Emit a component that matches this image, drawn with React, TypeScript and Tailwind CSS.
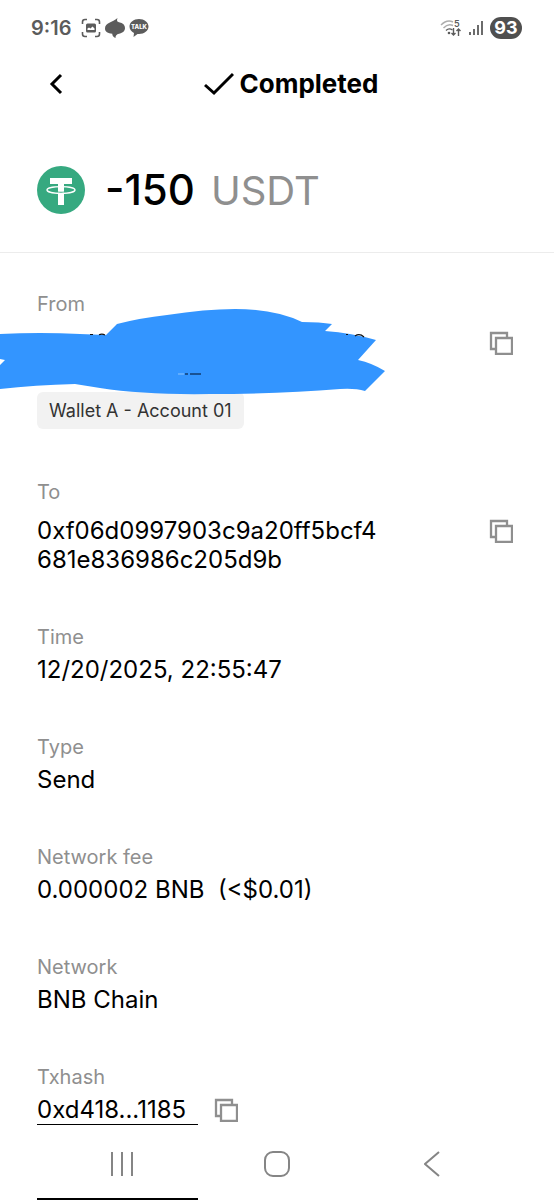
import type { ReactNode } from "react";

const fields = [
  { label: "Time", value: "12/20/2025, 22:55:47" },
  { label: "Type", value: "Send" },
  { label: "Network fee", value: "0.000002 BNB  (<$0.01)" },
  { label: "Network", value: "BNB Chain" },
];

function CopyButton({ label }: { label: string }) {
  return (
    <button type="button" aria-label={label} className="flex h-[29px] w-8 shrink-0 items-center justify-center">
      <svg width="24" height="24" viewBox="0 0 24 24" fill="none" stroke="#8f8f8f" strokeWidth="2.3">
        <path d="M6 18H2V2h16v4" />
        <path d="M7 7h16v16H7z" />
      </svg>
    </button>
  );
}

function Field({ label, children, className = "gap-1" }: { label: string; children: ReactNode; className?: string }) {
  return (
    <div className={`flex flex-col ${className}`}>
      <dt className="text-xl leading-7 text-[#8f8f8f]">{label}</dt>
      <dd className="text-2xl leading-[29px] whitespace-pre">{children}</dd>
    </div>
  );
}

function StatusBar() {
  return (
    <div className="flex h-14 items-center justify-between pr-8 pl-[31px] text-[#5c5c5c]">
      <div className="flex items-center gap-1">
        <span className="mr-1.5 text-xl font-semibold">9:16</span>
        <svg width="20" height="20" viewBox="0 0 20 20" fill="none" stroke="currentColor" strokeWidth="1.6">
          <path d="M1.500 6V4q0-2.500 2.500-2.500h2M14 1.500h2q2.500 0 2.500 2.500v2M18.500 14v2q0 2.500-2.500 2.500h-2M6 18.500H4q-2.500 0-2.500-2.500v-2" />
          <rect x="5" y="5.500" width="10" height="9" rx="1.500" fill="currentColor" stroke="none" />
          <path d="M6.500 12v-1.500l1.500-1 1.500 1 2-2 2 2V12z" fill="white" stroke="none" />
        </svg>
        <svg width="20" height="20" viewBox="0 0 20 20" fill="currentColor">
          <path d="M12.500 0C11.500 2.500 12 3.800 14 4.300c4 .8 6 2.900 6 5.700 0 3.500-3 5-6 5.800-2.500.6-3.500 1.700-3.500 4.200C8.500 19 7 17.500 7.300 15.700 3 15.500 0 13.800 0 10.500 0 4.500 7.500 4.500 12.500 0z" />
        </svg>
        <svg width="20" height="20" viewBox="0 0 20 20">
          <path d="M10 1c5.300 0 9.500 3.300 9.500 7.500S15.300 16 10 16l-1.500-.1L4.500 19l.5-4C2.300 13.700.5 11.300.5 8.500.5 4.300 4.700 1 10 1z" fill="currentColor" />
          <text x="10" y="11" textAnchor="middle" fill="white" fontSize="6" fontWeight="800" fontFamily="Inter">TALK</text>
        </svg>
      </div>
      <div className="flex items-center gap-1.5">
        <svg width="22" height="18" viewBox="0 0 22 18" fill="none" stroke="currentColor" strokeWidth="1.400">
          <path d="M1 6q6-6 12-3M3.500 9q4.500-5 9.500-2.500" opacity=".5" />
          <path d="M6 11.500q3-3 6.500-.5" />
          <circle cx="9" cy="14" r="1.300" fill="currentColor" stroke="none" />
          <path d="M13.500 9v7m-2-2l2 2 2-2M18.500 17v-7m-2 2l2-2 2 2" />
          <text x="14" y="8" fill="currentColor" stroke="none" fontSize="9" fontWeight="600" fontFamily="Inter">5</text>
        </svg>
        <svg width="16" height="18" viewBox="0 0 16 18" fill="none" stroke="currentColor" strokeWidth="1.800">
          <path d="M2 16v-3M6 16v-6M10 16V6M14 16V2" />
        </svg>
        <span className="flex h-[22px] w-8 items-center justify-center rounded-full bg-[#4f4f4f] text-lg font-bold text-white">
          93
        </span>
      </div>
    </div>
  );
}

function Scribble() {
  return (
    <svg className="absolute -top-6 -left-[37px]" width="390" height="96" viewBox="0 304 390 96" aria-hidden>
      <path
        d="M0 334Q40 332 80 334L106 335L117 324Q140 318 167 315Q205 309 235 309Q275 309 302 322Q320 322 332 324L325 331Q352 333 376 340L358 360Q372 363 385 371L365 391Q355 388 340 389Q280 394 210 394Q145 395 100 388L75 384Q35 385 0 389V365L5 360L0 359Z"
        fill="#3395ff"
      />
      <path d="M90 334.500h3m6 .3q3-1.500 6 .2M346 334.500h2M355 336q4.500-3 9 1" fill="none" stroke="#111" strokeWidth="1.200" />
      <path d="M178 374h6" stroke="#8cc4ff" />
      <path d="M185 374h3m2 0h11" stroke="#123d70" strokeWidth="1.500" />
    </svg>
  );
}

export default function App() {
  return (
    <div className="w-full overflow-hidden bg-white font-['Inter',sans-serif] text-black">
      <StatusBar />

      <header className="grid h-14 grid-cols-[80px_1fr_80px] items-center">
        <button type="button" aria-label="Back" className="flex h-12 items-center justify-center pl-8">
          <svg width="14" height="22" viewBox="0 0 14 22" fill="none" stroke="currentColor" strokeWidth="3">
            <path d="M12 2L3 11l9 9" />
          </svg>
        </button>
        <h1 className="flex items-center justify-center gap-1.5 pl-7 text-[26px] leading-8 font-bold">
          <svg width="30" height="24" viewBox="0 0 30 24" fill="none" stroke="currentColor" strokeWidth="3">
            <path d="M1 13l9 8L29 2" />
          </svg>
          Completed
        </h1>
      </header>

      <main>
        <section className="flex items-center gap-5 border-b border-[#ececec] px-[37px] pt-[54px] pb-[38px]">
          <svg width="48" height="48" viewBox="0 0 48 48">
            <circle cx="24" cy="24" r="24" fill="#36a980" />
            <path d="M13 12h22v6h-8v21h-6V18h-8z" fill="white" />
            <path d="M20 26q4 .6 8 0" fill="none" stroke="#36a980" strokeWidth="1.200" />
            <ellipse cx="24" cy="24" rx="14" ry="3.300" fill="none" stroke="white" strokeWidth="1.300" />
          </svg>
          <p className="flex items-baseline gap-4 text-[42px] leading-[48px] font-medium">
            -150 <span className="text-[40px] leading-none font-normal text-[#8f8f8f]">USDT</span>
          </p>
        </section>

        <dl className="flex flex-col gap-[49px] px-[37px] pt-[37px]">
          <Field label="From" className="gap-2.5">
            <div className="relative flex h-[58px] justify-end">
              <Scribble />
              <CopyButton label="Copy sender address" />
            </div>
            <span className="mt-1.5 inline-flex h-[37px] items-center rounded-md bg-[#f2f2f2] px-3 text-lg text-[#333]">
              Wallet A - Account 01
            </span>
          </Field>
          <Field label="To" className="gap-2.5">
            <div className="flex justify-between">
              <span>
                0xf06d0997903c9a20ff5bcf4
                <br />
                681e836986c205d9b
              </span>
              <CopyButton label="Copy recipient address" />
            </div>
          </Field>
          {fields.map((field) => (
            <Field key={field.label} label={field.label}>
              {field.value}
            </Field>
          ))}
          <Field label="Txhash">
            <div className="flex gap-3">
              <a href="#tx" className="min-w-[161px] border-b border-black">
                0xd418...1185
              </a>
              <CopyButton label="Copy transaction hash" />
            </div>
          </Field>
        </dl>
      </main>

      <nav className="mt-1 grid h-[69px] grid-cols-3 px-11 text-[#858585]">
        <button type="button" aria-label="Recent apps" className="flex items-center justify-center">
          <svg width="24" height="24" viewBox="0 0 24 24" stroke="currentColor" strokeWidth="2">
            <path d="M2 0v24M12 0v24M22 0v24" />
          </svg>
        </button>
        <button type="button" aria-label="Home" className="flex items-center justify-center">
          <svg width="26" height="26" viewBox="0 0 26 26" fill="none" stroke="currentColor" strokeWidth="2">
            <rect x="1" y="1" width="24" height="24" rx="8" />
          </svg>
        </button>
        <button type="button" aria-label="Previous" className="flex items-center justify-center">
          <svg width="16" height="26" viewBox="0 0 16 26" fill="none" stroke="currentColor" strokeWidth="2">
            <path d="M15 1L1 13l14 12" />
          </svg>
        </button>
      </nav>
      <div className="ml-[37px] h-0.5 w-[161px] bg-black" />
    </div>
  );
}
